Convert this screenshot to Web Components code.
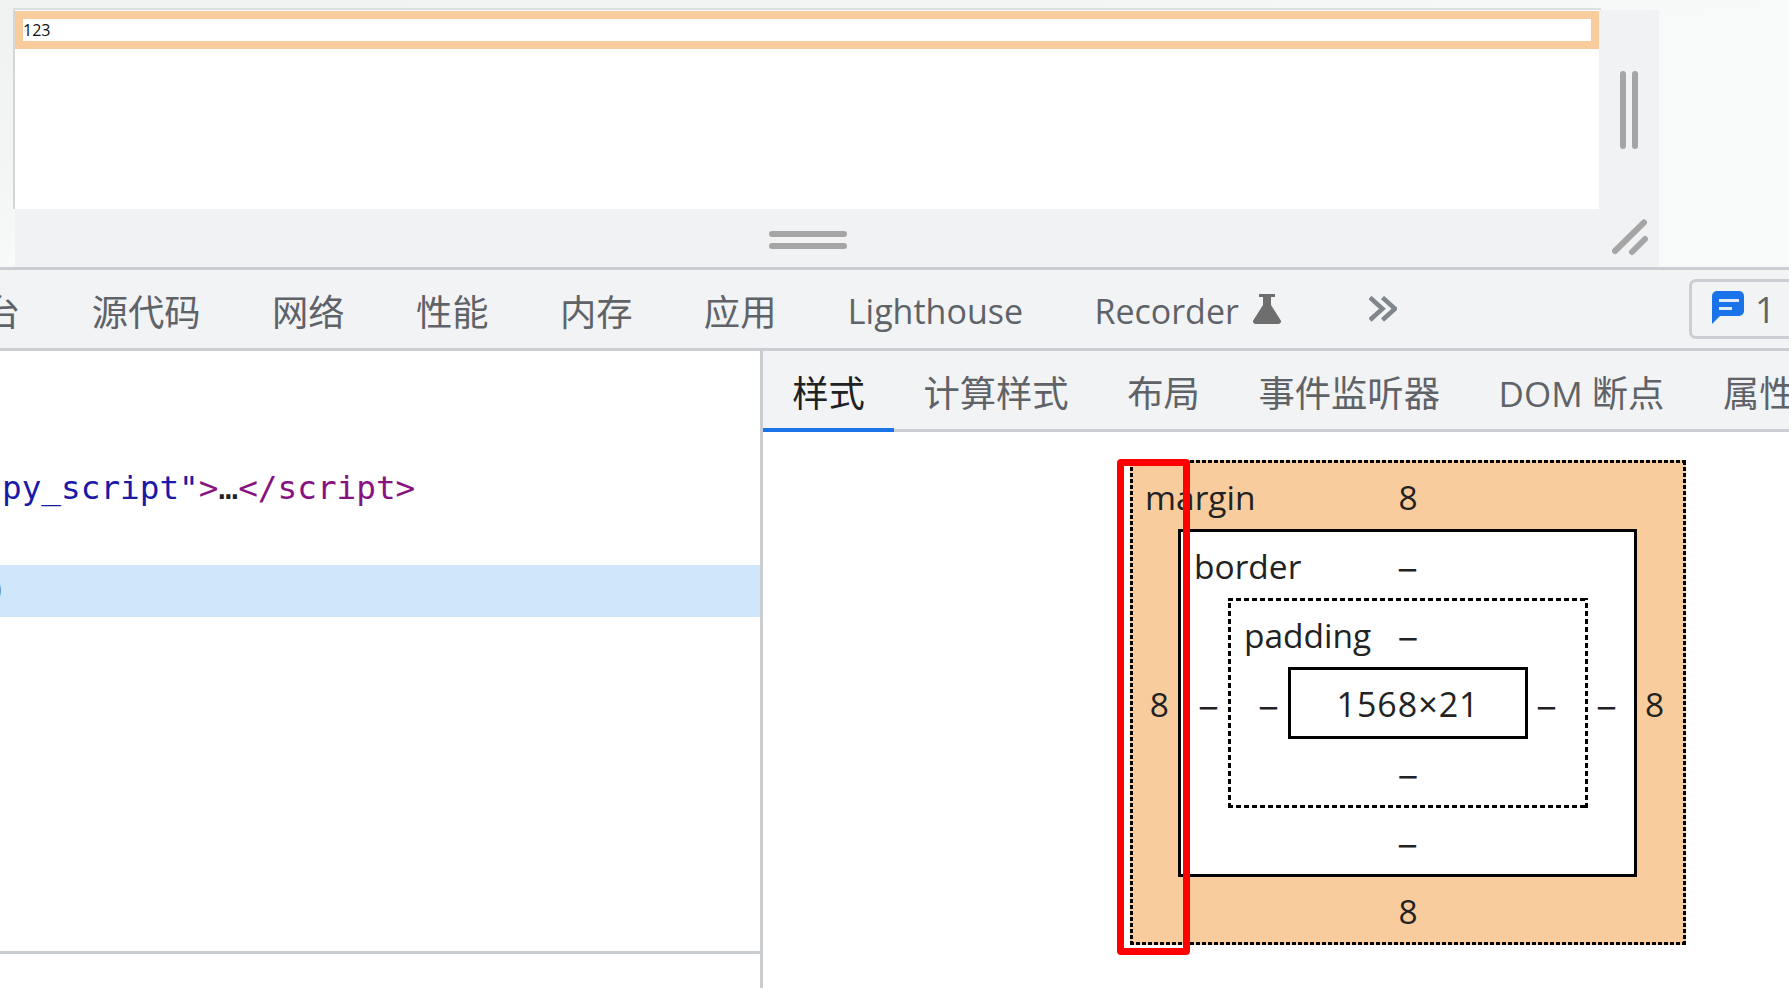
<!DOCTYPE html>
<html lang="zh-CN">
<head>
<meta charset="utf-8">
<title>DevTools</title>
<style>
  html, body { margin: 0; height: 100%; background: #fff; overflow: hidden; }
  body { font-family: "Open Sans", "Noto Sans CJK SC", sans-serif; }
  dt-app { width: 1789px; height: 988px; }
</style>
</head>
<body>
<dt-app>
  <device-stage slot="stage"><page-viewport>123</page-viewport></device-stage>
  <dt-tabbar slot="main">
    <dt-tab clip>台</dt-tab>
    <dt-tab>源代码</dt-tab>
    <dt-tab>网络</dt-tab>
    <dt-tab>性能</dt-tab>
    <dt-tab>内存</dt-tab>
    <dt-tab>应用</dt-tab>
    <dt-tab latin>Lighthouse</dt-tab>
    <dt-tab latin flask>Recorder</dt-tab>
    <more-tabs></more-tabs>
    <issue-badge>1</issue-badge>
  </dt-tabbar>
  <elements-tree slot="tree"></elements-tree>
  <dt-sidetabs slot="sidetabs">
    <dt-tab side selected>样式</dt-tab>
    <dt-tab side>计算样式</dt-tab>
    <dt-tab side>布局</dt-tab>
    <dt-tab side>事件监听器</dt-tab>
    <dt-tab side><span style="white-space:pre"><span style="font-size:35px">DOM </span>断点</span></dt-tab>
    <dt-tab side>属性</dt-tab>
  </dt-sidetabs>
  <box-model slot="box"></box-model>
</dt-app>

<script>
function shadow(el, html) {
  el.attachShadow({ mode: 'open' }).innerHTML = html;
}

customElements.define('dt-app', class extends HTMLElement {
  constructor() { super(); shadow(this, `
    <style>
      :host { display: grid; grid-template-rows: 267px 3px 78px 3px 1fr; overflow: hidden; }
      .line { background: #cbcdd2; }
      .split { display: grid; grid-template-columns: 760px 3px 1fr; min-height: 0; }
      .side { display: flex; flex-direction: column; min-width: 0; }
      .vline { background: #c9ccd1; }
    </style>
    <slot name="stage"></slot>
    <div class="line"></div>
    <slot name="main"></slot>
    <div class="line"></div>
    <div class="split">
      <slot name="tree"></slot>
      <div class="vline"></div>
      <div class="side">
        <slot name="sidetabs"></slot>
        <slot name="box"></slot>
      </div>
    </div>`);
  }
});

customElements.define('device-stage', class extends HTMLElement {
  constructor() { super(); shadow(this, `
    <style>
      :host {
        display: block; box-sizing: border-box; height: 267px; padding: 10px 0 0 15px;
        background: linear-gradient(to bottom right, #f0f2f2 0, #f3f5f5 30%, #f8faf9 50%);
      }
      .panel { width: 1644px; height: 257px; background: #f1f2f4; display: grid; grid-template-columns: 1586px 58px; grid-template-rows: 199px 58px; }
      .frame { margin: -2px 0 0 -2px; border-top: 2px solid #dcdedf; }
      .vh { display: flex; justify-content: center; gap: 6px; align-items: center; padding-right: 2px; }
      .vh i { display: block; width: 6px; height: 78px; border-radius: 3px; background: #a5a5a5; }
      .hh { display: flex; flex-direction: column; align-items: center; justify-content: center; gap: 6px; padding: 4px 0 0 0; }
      .hh i { display: block; width: 78px; height: 6px; border-radius: 3px; background: #a5a5a5; }
      .corner { padding: 9px 0 0 9px; }
      svg { display: block; }
    </style>
    <div class="panel">
      <div class="frame"><slot></slot></div>
      <div class="vh"><i></i><i></i></div>
      <div class="hh"><i></i><i></i></div>
      <div class="corner">
        <svg width="40" height="40" viewBox="0 0 40 40" fill="none" stroke="#a5a5a5" stroke-width="6" stroke-linecap="round">
          <path d="M5 33 34 4.500M22 34 35 21"/>
        </svg>
      </div>
    </div>`);
  }
});

customElements.define('page-viewport', class extends HTMLElement {
  constructor() { super(); shadow(this, `
    <style>
      :host { display: block; box-sizing: border-box; width: 1586px; height: 199px; background: #fff; border-left: 2px solid #d3d5d6; padding-top: 1px; }
      .m { width: 1584px; box-sizing: border-box; height: 38px; padding: 8px; background: #f9cc9d; }
      .c { height: 22px; background: #fff; font: 16px/22px "Open Sans", sans-serif; color: #111; padding-left: 0; }
    </style>
    <div class="m"><div class="c"><slot></slot></div></div>`);
  }
});

customElements.define('dt-tabbar', class extends HTMLElement {
  constructor() { super(); shadow(this, `
    <style>
      :host { display: flex; align-items: stretch; background: #f1f3f5; height: 78px; overflow: hidden; white-space: nowrap; --pad: 35.700px; }
    </style>
    <slot></slot>`);
  }
});

customElements.define('dt-sidetabs', class extends HTMLElement {
  constructor() { super(); shadow(this, `
    <style>
      :host { display: flex; align-items: stretch; box-sizing: border-box; background: #f1f3f5; height: 81px; border-bottom: 3px solid #cbcdd2; white-space: nowrap; --pad: 29.300px; }
    </style>
    <slot></slot>`);
  }
});

customElements.define('dt-tab', class extends HTMLElement {
  constructor() { super(); shadow(this, `
    <style>
      :host { display: flex; align-items: center; flex: none; box-sizing: border-box; position: relative; padding: 6px var(--pad) 0; color: #5f6368; font-size: 36.300px; line-height: 48px; font-family: "Open Sans", "Noto Sans CJK SC", sans-serif; }
      :host([clip]) { padding-left: 0; margin-left: -16px; }
      :host([latin]) { font-size: 34px; padding-top: 4px; }
      :host([flask]) { padding-right: 0; }
      :host([selected]) { color: #202124; }
      :host([selected])::after { content: ""; position: absolute; left: 0; right: 0; bottom: -3px; height: 4px; background: #1a73e8; }
      svg { display: none; flex: none; margin-left: 14px; }
      :host([flask]) svg { display: block; margin-top: -5px; }
    </style>
    <slot></slot>
    <svg width="28" height="30" viewBox="0 0 28 30" fill="#6e6e6e"><path d="M6 0H22V3H18V11L27.500 26A2.500 2.500 0 0 1 25.500 30H2.500A2.500 2.500 0 0 1 .5 26L10 11V3H6Z"/></svg>`);
  }
});

customElements.define('more-tabs', class extends HTMLElement {
  constructor() { super(); shadow(this, `
    <style>
      :host { display: flex; align-items: center; flex: none; margin-left: 88px; }
      svg { display: block; }
    </style>
    <svg width="28" height="26" viewBox="0 0 28 26" fill="none" stroke="#80868b" stroke-width="4.500">
      <path d="M1 1.500 13.500 12.700 1 24M13.500 1.500 26 12.700 13.500 24"/>
    </svg>`);
  }
});

customElements.define('issue-badge', class extends HTMLElement {
  constructor() { super(); shadow(this, `
    <style>
      :host { display: flex; align-items: center; flex: none; box-sizing: border-box; height: 60px; align-self: center; margin-left: auto; margin-right: -14px; width: 114px; padding-left: 20px; border: 3px solid #cbcdd2; border-radius: 7px; color: #5f6368; font-size: 36px; }
      svg { display: block; margin-right: 11px; margin-top: -3px; }
    </style>
    <svg width="32" height="33" viewBox="0 0 32 33">
      <path fill="#1a73e8" d="M5 0H27A5 5 0 0 1 32 5V20A5 5 0 0 1 27 25H8L0 33V5A5 5 0 0 1 5 0Z"/>
      <path fill="#dfeafb" d="M7 8H27V11H7ZM7 16H20V19H7Z"/>
    </svg>
    <slot></slot>`);
  }
});

customElements.define('elements-tree', class extends HTMLElement {
  constructor() { super(); shadow(this, `
    <style>
      :host { display: grid; grid-template-rows: 600px 3px 1fr; background: #fff; min-height: 0; overflow: hidden; }
      .tree { padding-top: 110px; font: 32.700px/52px "DejaVu Sans Mono", monospace; white-space: nowrap; overflow: hidden; }
      .row { height: 52px; overflow: hidden; color: #1a1aa6; }
      .first { line-height: 54px; padding-left: 2px; }
      .t { color: #881280; }
      .e { color: #222; }
      .sel { background: #cfe6fb; color: #666; }
      .sel span { display: inline-block; margin-left: -17px; }
      .rule { background: #c9ccd1; }
    </style>
    <div class="tree">
      <div class="row first">py_script"<span class="t">&gt;</span><span class="e">…</span><span class="t">&lt;/script&gt;</span></div>
      <div class="row"></div>
      <div class="row sel"><span>0</span></div>
    </div>
    <div class="rule"></div>
    <div></div>`);
  }
});

customElements.define('bm-layer', class extends HTMLElement {
  constructor() { super();
    const a = n => this.getAttribute(n) || '';
    const v = n => `<span class="v">${a(n)}</span>`;
    shadow(this, `
    <style>
      :host {
        display: grid; box-sizing: border-box; padding: 3px;
        grid-template-columns: var(--l) auto var(--r);
        grid-template-rows: var(--t) auto var(--b);
        color: #222; font-size: 33.500px; line-height: 44px;
      }
      :host([kind=solid]) { border: 3px solid #000; padding: 0; background: #fff; }
      :host([kind=margin]) { background:
          repeating-linear-gradient(90deg,#000 0 4px,transparent 4px 6px) 0 0/100% 3px no-repeat,
          repeating-linear-gradient(90deg,#000 0 4px,transparent 4px 6px) 0 100%/100% 3px no-repeat,
          repeating-linear-gradient(0deg,#000 0 4px,transparent 4px 6px) 0 0/3px 100% no-repeat,
          repeating-linear-gradient(0deg,#000 0 4px,transparent 4px 6px) 100% 0/3px 100% no-repeat,
          #f9cc9d; }
      :host([kind=padding]) { background:
          repeating-linear-gradient(90deg,#000 0 5px,transparent 5px 8px) 0 0/100% 3px no-repeat,
          repeating-linear-gradient(90deg,#000 0 5px,transparent 5px 8px) 0 100%/100% 3px no-repeat,
          repeating-linear-gradient(0deg,#000 0 5px,transparent 5px 8px) 0 0/3px 100% no-repeat,
          repeating-linear-gradient(0deg,#000 0 5px,transparent 5px 8px) 100% 0/3px 100% no-repeat,
          #fff; }
      :host([dash]) .v { font-size: 39px; }
      .top, .bottom { grid-column: 1 / -1; display: grid; grid-template-columns: 1fr auto 1fr; align-items: center; padding-top: 2px; box-sizing: border-box; }
      .lab { padding-left: var(--ll); }
      .left, .right { display: flex; align-items: center; padding-top: 2px; box-sizing: border-box; }
      .left { justify-content: flex-end; padding-right: 9px; }
      .right { justify-content: flex-start; padding-left: 8px; }
      .mid { display: flex; }
    </style>
    <div class="top"><span class="lab">${a('label')}</span>${v('top')}<span></span></div>
    <div class="left">${v('left')}</div>
    <div class="mid"><slot></slot></div>
    <div class="right">${v('right')}</div>
    <div class="bottom"><span></span>${v('bottom')}<span></span></div>`);
  }
});

customElements.define('bm-content', class extends HTMLElement {
  constructor() { super(); shadow(this, `
    <style>
      :host { display: flex; align-items: center; justify-content: center; box-sizing: border-box; width: 240px; height: 72px; padding-top: 2px; border: 3px solid #000; background: #fff; color: #222; font-size: 34px; letter-spacing: 1px; }
    </style>
    <slot></slot>`);
  }
});

customElements.define('box-model', class extends HTMLElement {
  constructor() { super(); shadow(this, `
    <style>
      :host { display: block; flex: 1; background: #fff; padding: 28px 0 0 367px; }
      .wrap { position: relative; width: 556px; }
      .hl { position: absolute; left: -13px; top: -1px; width: 73px; height: 496px; box-sizing: border-box; border: 7px solid #ff0000; border-radius: 4px; pointer-events: none; }
    </style>
    <div class="wrap">
      <bm-layer kind="margin" label="margin" top="8" right="8" bottom="8" left="8"
        style="--l:45px;--r:46px;--t:66px;--b:65px;--ll:12px">
        <bm-layer kind="solid" dash label="border" top="‒" right="‒" bottom="‒" left="‒"
          style="--l:47px;--r:46px;--t:66px;--b:66px;--ll:13px">
          <bm-layer kind="padding" dash label="padding" top="‒" right="‒" bottom="‒" left="‒"
            style="--l:57px;--r:57px;--t:66px;--b:66px;--ll:13px">
            <bm-content>1568×21</bm-content>
          </bm-layer>
        </bm-layer>
      </bm-layer>
      <div class="hl"></div>
    </div>`);
  }
});
</script>
</body>
</html>
